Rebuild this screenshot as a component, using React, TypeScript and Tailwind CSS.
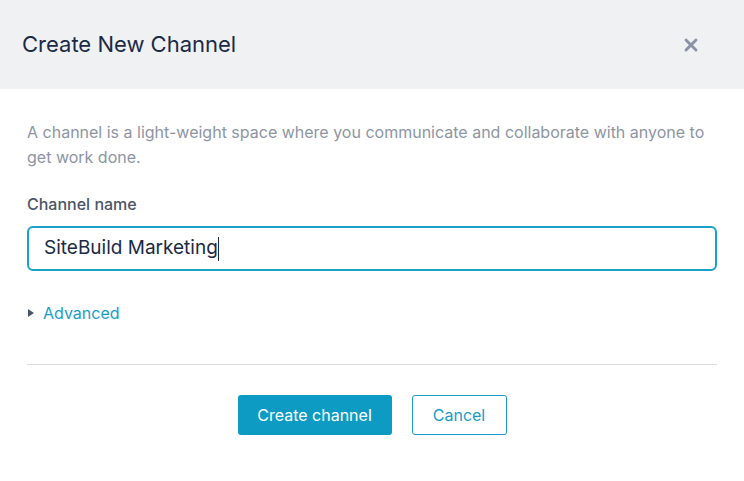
import { X } from 'lucide-react';

export default function App() {
  return (
    <div className="w-[744px] h-[481px] bg-white font-['Inter','Noto_Sans',sans-serif]">
      {/* Header */}
      <div className="h-[89px] bg-[#f0f1f3] flex items-center justify-between pl-[22px] pr-[43px]">
        <h2 className="text-[22px] text-[#1b2a47]">Create New Channel</h2>
        <button className="text-[#8a93a6]">
          <X className="w-[20px] h-[20px]" strokeWidth={3.4} />
        </button>
      </div>

      {/* Body */}
      <div className="px-[27px]">
        <p className="pt-[31px] text-[16px] leading-[25px] text-[#8d95a3]">
          A channel is a light-weight space where you communicate and collaborate with anyone to get work done.
        </p>

        <label className="block mt-[24px] text-[16px] leading-[20px] font-medium text-[#4b5568]">
          Channel name
        </label>
        <div className="mt-[12px] h-[45px] border-2 border-[#1ba0c9] rounded-[6px] flex items-center px-[15px]">
          <span className="text-[19px] text-[#1b2a47]">SiteBuild Marketing</span>
          <span className="w-px h-[24px] bg-[#1b2a47]" />
        </div>

        <div className="mt-[32px] flex items-center gap-[9px] h-[20px]">
          <span className="w-0 h-0 border-y-[4.5px] border-y-transparent border-l-[6px] border-l-[#4b5568] ml-px" />
          <span className="text-[16px] text-[#1a9cc7]">Advanced</span>
        </div>

        <div className="mt-[41px] border-t border-[#d9dbe0]" />

        <div className="mt-[30px] flex justify-center gap-[20px]">
          <button className="w-[154px] h-[40px] rounded-[3px] bg-[#0d9bc4] text-white text-[16px]">
            Create channel
          </button>
          <button className="w-[95px] h-[40px] rounded-[3px] border border-[#1a9cc7] text-[#1a9cc7] text-[16px]">
            Cancel
          </button>
        </div>
      </div>
    </div>
  );
}
